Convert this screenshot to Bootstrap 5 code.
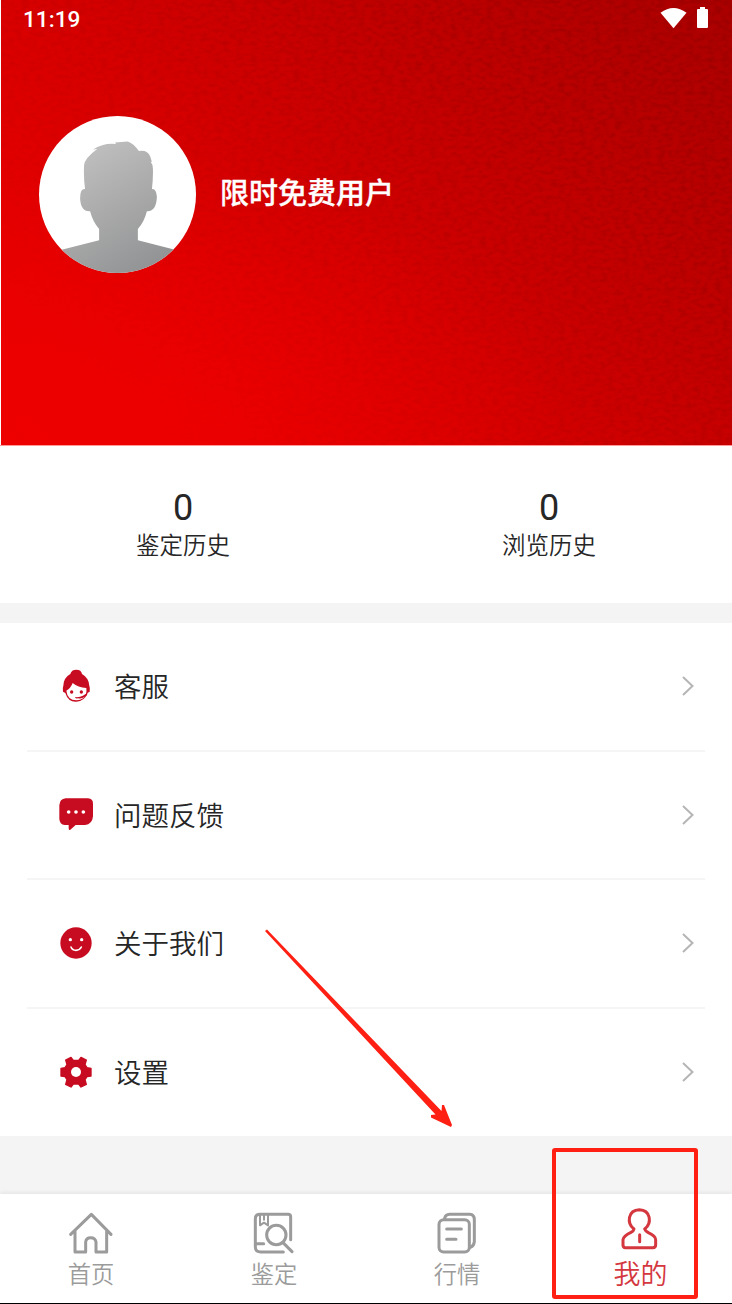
<!DOCTYPE html>
<html lang="zh-CN">
<head>
<meta charset="utf-8">
<meta name="viewport" content="width=device-width, initial-scale=1">
<title>我的</title>
<link href="https://cdn.jsdelivr.net/npm/bootstrap@5.3.0/dist/css/bootstrap.min.css" rel="stylesheet">
<style>
body{font-family:Roboto,"Noto Sans CJK SC",sans-serif;font-weight:350;color:#262626;background:#fff}
svg{display:block;flex:none}
.screen{width:732px;height:1304px;overflow:hidden;background:#f4f4f4;border-bottom:1px solid #000}
.hero{height:446px;background:#fff;padding-left:1px;border-bottom:1px solid #f99}
.hero-fill{background:radial-gradient(ellipse 420px 240px at 150px 410px,rgba(240,0,0,.7),rgba(240,0,0,0)),linear-gradient(44deg,#ec0000 0%,#e40000 22%,#d40000 46%,#c00000 72%,#ab0000 100%)}
.grain{inset:0;width:100%;height:100%}
.status-bar{height:38px;padding:0 22px 0 22px}
.clock{font-size:22.6px;font-weight:500;line-height:38px;padding-top:2px}
.profile{padding:78px 0 0 38px;gap:24px}
.user-name{font-family:"Noto Sans CJK SC",sans-serif;font-size:29px;font-weight:500;line-height:40px;margin-top:-7px;-webkit-text-stroke:.3px #fff}
.stats{height:157px;padding-top:41px}
.num{font-size:36px;font-weight:400;line-height:42px}
.cap{font-size:23.5px;line-height:34px}
.menu{margin-top:20px;height:513px}
.menu-row{height:128.5px;padding:0 38px 2px 56px}
.menu-row+.menu-row::before{content:"";position:absolute;left:27px;right:27px;top:-2px;height:2px;background:#f5f5f5}
.menu-text{font-size:27.5px;line-height:40px;margin-left:18px;padding-top:4px}
.tabs{height:109px;margin-top:58px;box-shadow:0 -1px 4px #e2e2e2}
.tab{padding-top:18px;color:#9b9b9b;font-size:23.3px}
.tab svg{margin-left:-2px}
.tab span{line-height:32px;margin-top:5px;margin-left:-1px}
.tab.on{color:#d4373e;font-size:27px;padding-top:13px}
.tab.on span{line-height:36px;margin-top:6px;margin-left:0}
.arrow{left:0;top:0;pointer-events:none}
.marker{left:552px;top:1148px;width:146px;height:151px;border:4px solid #ff2013;border-radius:3px}
</style>
</head>
<body>
<main class="screen position-relative d-flex flex-column">
  <header class="hero flex-shrink-0">
    <div class="hero-fill h-100 position-relative text-white">
      <svg class="grain position-absolute" aria-hidden="true">
        <defs>
          <filter id="leather" x="0" y="0" width="100%" height="100%" color-interpolation-filters="sRGB">
            <feTurbulence type="fractalNoise" baseFrequency=".14 .24" numOctaves="3" seed="4"/>
            <feColorMatrix values="0 0 0 0 .3  0 0 0 0 0  0 0 0 0 0  .4 0 0 0 -.15"/>
          </filter>
          <linearGradient id="fade" x1="0" y1="1" x2="1" y2=".3"><stop offset=".15" stop-color="#000"/><stop offset=".9" stop-color="#fff"/></linearGradient>
          <mask id="m"><rect width="100%" height="100%" fill="url(#fade)"/></mask>
        </defs>
        <g mask="url(#m)"><rect width="100%" height="100%" filter="url(#leather)"/></g>
      </svg>
      <div class="status-bar position-relative d-flex justify-content-between align-items-center">
        <span class="clock">11:19</span>
        <svg width="50" height="26" viewBox="0 0 50 26" fill="#fff"><path d="M.5 7Q13.500-2.500 26.500 7L13.500 22.500Z" transform="translate(0 -.3)"/><path d="M37 4q0-1 1-1h2V1h5v2h2q1 0 1 1v17q0 1-1 1h-9q-1 0-1-1Z"/></svg>
      </div>
      <div class="profile position-relative d-flex align-items-center">
        <svg width="157" height="157" viewBox="27 33 470 470">
          <defs><clipPath id="disc"><circle cx="262" cy="268" r="235"/></clipPath>
          <linearGradient id="grey" gradientUnits="userSpaceOnUse" x1="170" y1="150" x2="370" y2="480"><stop stop-color="#bdbdbd"/><stop offset="1" stop-color="#929394"/></linearGradient></defs>
          <circle cx="262" cy="268" r="235" fill="#fff"/>
          <path clip-path="url(#disc)" fill="url(#grey)" d="M188 134Q220 113 258 117L254 112L292 109Q310 114 326 138Q352 134 360 154L365 171L361 169Q368 178 368 190Q369 220 365 252Q378 250 380 275Q378 320 350 318Q342 350 323 371V405L440 435V510H80V437L207 405V371Q188 350 180 318Q152 320 150 280Q150 250 165 252Q160 220 162 180Q163 160 202 131Z"/>
        </svg>
        <span class="user-name">限时免费用户</span>
      </div>
    </div>
  </header>

  <section class="stats row g-0 bg-white text-center flex-shrink-0">
    <div class="col"><div class="num">0</div><div class="cap">鉴定历史</div></div>
    <div class="col"><div class="num">0</div><div class="cap">浏览历史</div></div>
  </section>

  <section class="menu bg-white flex-shrink-0">
    <div class="menu-row position-relative d-flex align-items-center">
      <svg width="40" height="40" viewBox="18 18 120 120"><path fill="#c70b20" d="M61 42Q64 29 79 29T96 42Q117 54 118 78Q121 84 119 95L112 99Q104 124 79 125T46 99L39 95Q37 84 40 77Q41 53 61 42Z"/><path fill="#fff" d="M49 92Q62 85 68 69Q84 82 109 84Q113 119 79 121Q52 120 49 92Z"/><g fill="#c70b20"><circle cx="65" cy="96" r="5"/><circle cx="94" cy="96" r="5"/><path d="M75 111Q98 114 113 96L111 106Q100 117 83 115Q77 117 75 111Z"/></g></svg>
      <span class="menu-text">客服</span>
      <svg class="ms-auto" width="12" height="22" viewBox="0 0 12 22" fill="none" stroke="#b5b5b5" stroke-width="2"><path d="M1 2L10.500 11L1 20"/></svg>
    </div>
    <div class="menu-row position-relative d-flex align-items-center">
      <svg width="40" height="40" viewBox="18 405 120 120"><path fill="#c70b20" d="M47 415H114Q129 416 129 431V469Q127 493 105 495H77L61 509Q56 512 56 505V495H44Q29 494 28 477V436Q29 417 47 415Z"/><g fill="#fff"><circle cx="56" cy="456" r="5.500"/><circle cx="78" cy="456" r="5.500"/><circle cx="100" cy="456" r="5.500"/></g></svg>
      <span class="menu-text">问题反馈</span>
      <svg class="ms-auto" width="12" height="22" viewBox="0 0 12 22" fill="none" stroke="#b5b5b5" stroke-width="2"><path d="M1 2L10.500 11L1 20"/></svg>
    </div>
    <div class="menu-row position-relative d-flex align-items-center">
      <svg width="40" height="40" viewBox="18 24 120 120"><circle cx="78" cy="84" r="47" fill="#c70b20"/><g fill="#fff"><circle cx="61" cy="74" r="5"/><circle cx="95" cy="74" r="5"/></g><path d="M63 96Q67 106 78 106T94 96" fill="none" stroke="#fff" stroke-width="5" stroke-linecap="round"/></svg>
      <span class="menu-text">关于我们</span>
      <svg class="ms-auto" width="12" height="22" viewBox="0 0 12 22" fill="none" stroke="#b5b5b5" stroke-width="2"><path d="M1 2L10.500 11L1 20"/></svg>
    </div>
    <div class="menu-row position-relative d-flex align-items-center">
      <svg width="40" height="40" viewBox="18 410 120 120"><path fill="#c70b20" stroke="#c70b20" stroke-width="4" stroke-linejoin="round" d="M47 434L63 426L70 435H86L93 426L109 434L105 448L111 457L123 459V482L111 484L105 493L109 507L93 515L86 506H70L63 515L47 507L51 493L45 484L33 482V459L45 457L51 448Z"/><circle cx="78" cy="470" r="15" fill="#fff"/></svg>
      <span class="menu-text">设置</span>
      <svg class="ms-auto" width="12" height="22" viewBox="0 0 12 22" fill="none" stroke="#b5b5b5" stroke-width="2"><path d="M1 2L10.500 11L1 20"/></svg>
    </div>
  </section>

  <nav class="tabs bg-white row g-0 flex-shrink-0">
    <div class="tab col d-flex flex-column align-items-center">
      <svg width="44" height="42" viewBox="57 65 132 126" fill="none" stroke="#9b9b9b" stroke-width="9" stroke-linecap="round" stroke-linejoin="round"><path d="M62 132L124 72L183 132M75 122V185H107V155Q108 142 122 142T138 155V185H170V122"/></svg>
      <span>首页</span>
    </div>
    <div class="tab col d-flex flex-column align-items-center">
      <svg width="44" height="42" viewBox="606 65 132 126" fill="none" stroke="#9b9b9b" stroke-width="9" stroke-linecap="round" stroke-linejoin="round"><path d="M722 148V80Q722 72 714 72H630Q616 72 616 86V170Q616 185 632 185H700M616 160H641M699 157L726 184"/><circle cx="679" cy="134" r="29"/><path stroke-width="6" d="M630 74V105L642 97L654 105V74M642 74V88"/></svg>
      <span>鉴定</span>
    </div>
    <div class="tab col d-flex flex-column align-items-center">
      <svg width="44" height="42" viewBox="46 215 132 126" fill="none" stroke="#9b9b9b" stroke-width="9" stroke-linecap="round" stroke-linejoin="round"><rect x="58" y="238" width="91" height="97" rx="14"/><path d="M75 234Q77 223 90 222H150Q164 223 164 238V304Q163 317 152 321M81 266H125M81 297H109"/></svg>
      <span>行情</span>
    </div>
    <div class="tab on col d-flex flex-column align-items-center">
      <svg width="44" height="44" viewBox="596 201 132 132" fill="none" stroke="#d4373e" stroke-width="9" stroke-linecap="round" stroke-linejoin="round"><path d="M644 267C621 249 626 210 660 209C694 210 699 249 676 267Q678 273 687 278Q709 288 709 299V315Q709 323 701 323H618Q611 323 611 315V299Q612 288 635 277Q643 273 644 267ZM661 284V305"/></svg>
      <span>我的</span>
    </div>
  </nav>

  <svg class="arrow position-absolute" width="732" height="1303" viewBox="0 0 732 1303" fill="#ff2013"><path d="M265 931L267 929.500L441.500 1111L442 1105H444L452 1125L451 1127L431 1117.500V1115L435.500 1114.500Z"/></svg>
  <div class="marker position-absolute"></div>
</main>
<script src="https://cdn.jsdelivr.net/npm/bootstrap@5.3.0/dist/js/bootstrap.bundle.min.js"></script>
</body>
</html>
